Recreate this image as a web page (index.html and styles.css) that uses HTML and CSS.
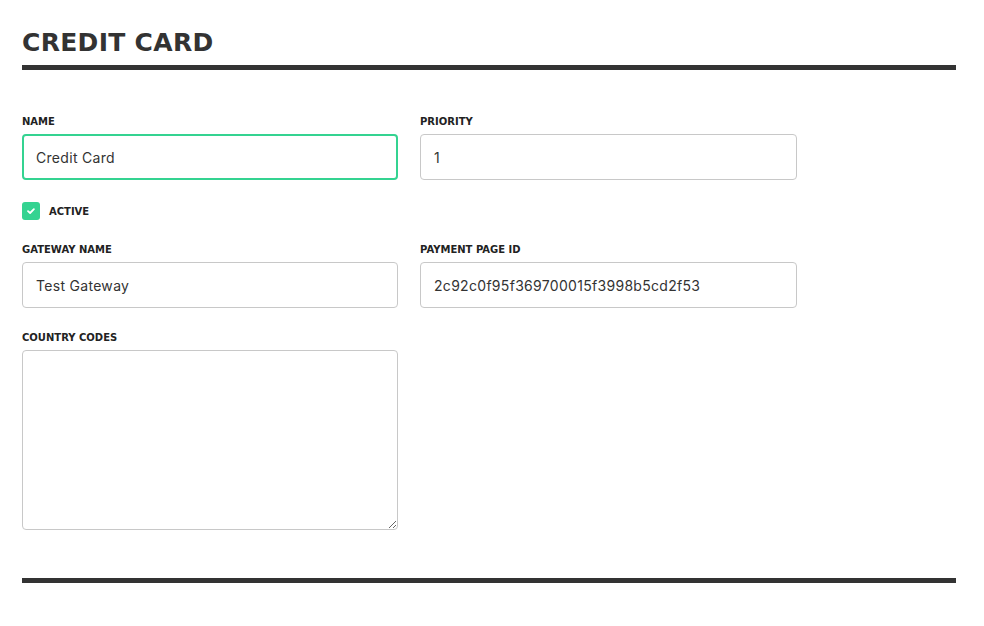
FILE: index.html
```html
<!DOCTYPE html>
<html lang="en">
<head>
  <meta charset="UTF-8" />
  <meta name="viewport" content="width=device-width, initial-scale=1" />
  <title>Credit Card</title>
  <link rel="stylesheet" href="styles.css">
</head>
<body>
  <div class="page">
    <h1 class="page-title">CREDIT CARD</h1>

    <form class="method-form">
      <div class="field">
        <label for="name">Name</label>
        <input type="text" id="name" class="is-focused" value="Credit Card" />
      </div>
      <div class="field">
        <label for="priority">Priority</label>
        <input type="text" id="priority" value="1" />
      </div>

      <label class="check-row">
        <span class="check-box">
          <svg width="12" height="12" viewBox="0 0 12 12"><path d="M3 6.1 L5.1 8 L8.9 4.2" fill="none" stroke="#fff" stroke-width="1.8" stroke-linecap="round" stroke-linejoin="round"/></svg>
        </span>
        <span class="check-label">Active</span>
      </label>

      <div class="field">
        <label for="gateway">Gateway Name</label>
        <input type="text" id="gateway" value="Test Gateway" />
      </div>
      <div class="field">
        <label for="pageId">Payment Page ID</label>
        <input type="text" id="pageId" value="2c92c0f95f369700015f3998b5cd2f53" />
      </div>

      <div class="field field-wide">
        <label for="countries">Country Codes</label>
        <textarea id="countries"></textarea>
      </div>
    </form>

    <div class="page-footer"></div>
  </div>
</body>
</html>
```

FILE: styles.css
```css
body {
  margin: 0;
  background: #fff;
  color: #333;
  font-family: 'Inter', 'Open Sans', Arial, sans-serif;
}
.page {
  width: 934px;
  padding: 28px 22px 0 22px;
}
.page-title {
  margin: 0;
  padding-bottom: 7px;
  font-family: 'DejaVu Sans', Arial, sans-serif;
  font-size: 25px;
  font-weight: 800;
  line-height: 30px;
  letter-spacing: 0.3px;
  color: #333;
  border-bottom: 5px solid #333;
}
.method-form {
  display: grid;
  grid-template-columns: 376px 377px;
  column-gap: 22px;
  row-gap: 22px;
  margin-top: 45px;
}
.field {
  display: flex;
  flex-direction: column;
}
.field-wide {
  margin-top: 1px;
}
.field label {
  font-family: 'DejaVu Sans', Arial, sans-serif;
  font-size: 10px;
  font-weight: 700;
  line-height: 14px;
  text-transform: uppercase;
  color: #222;
  margin-bottom: 5px;
}
input[type="text"], textarea {
  box-sizing: border-box;
  height: 46px;
  padding: 0 13px;
  border: 1px solid #c8c8c8;
  border-radius: 4px;
  font-family: 'Inter', 'Open Sans', Arial, sans-serif;
  font-size: 14px;
  letter-spacing: 0.3px;
  color: #333;
  background: #fff;
  outline: none;
}
input.is-focused {
  border: 2px solid #34d391;
  padding: 0 12px;
}
textarea {
  height: 180px;
  resize: vertical;
}
.check-row {
  grid-column: 1 / 3;
  display: flex;
  align-items: center;
  gap: 9px;
  height: 18px;
  margin-bottom: 1px;
}
.check-box {
  width: 18px;
  height: 18px;
  border-radius: 3px;
  background: #34d391;
  display: flex;
  align-items: center;
  justify-content: center;
}
.check-label {
  font-family: 'DejaVu Sans', Arial, sans-serif;
  font-size: 10px;
  font-weight: 700;
  text-transform: uppercase;
  color: #222;
}
.page-footer {
  margin-top: 48px;
  border-top: 5px solid #333;
}
```
